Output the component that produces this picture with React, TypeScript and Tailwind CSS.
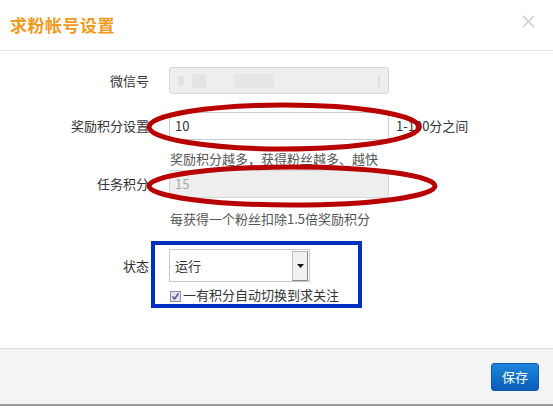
import React from 'react';

const font = { fontFamily: '"Noto Sans CJK SC", "Liberation Sans", sans-serif' };

function Row({ label, children, className = '' }: { label: string; children: React.ReactNode; className?: string }) {
    return (
        <div className={`flex items-center ${className}`}>
            <div className="w-[149px] shrink-0 text-right text-[13px] text-[#333]">{label}</div>
            <div className="ml-[20px] flex items-center">{children}</div>
        </div>
    );
}

export default function App() {
    return (
        <div className="relative flex h-[408px] w-[553px] flex-col bg-white" style={font}>
            {/* header */}
            <div className="flex h-[51px] shrink-0 items-center justify-between border-b border-[#e5e5e5] pl-[10px] pr-[18px]">
                <div className="text-[17px] font-bold tracking-[0.5px] text-[#f39a1e]">求粉帐号设置</div>
                <svg width="13" height="13" viewBox="0 0 13 13" className="mb-[8px]">
                    <path d="M1 1 L12 12 M12 1 L1 12" stroke="#c4c4c4" strokeWidth="1.2" />
                </svg>
            </div>

            {/* body */}
            <div className="flex-1 pt-[16px]">
                <Row label="微信号">
                    <div className="flex h-[27px] w-[220px] items-center gap-[8px] rounded-[3px] border border-[#d6d6d6] bg-[#eeeeee] px-[8px]">
                        <span className="h-[10px] w-[6px] bg-[#e2e2e2]" />
                        <span className="h-[14px] w-[14px] bg-[#e4e4e4]" />
                        <span className="ml-[20px] h-[14px] w-[40px] bg-[#e6e6e6]" />
                        <span className="ml-auto h-[12px] w-[2px] bg-[#dcdcdc]" />
                    </div>
                </Row>

                <Row label="奖励积分设置" className="mt-[18px]">
                    <div className="flex h-[28px] w-[220px] items-center rounded-[3px] border border-[#cccccc] bg-white px-[5px] text-[13px] text-[#333]">
                        10
                    </div>
                    <span className="ml-[7px] text-[13px] text-[#333]">1-100分之间</span>
                </Row>
                <div className="ml-[170px] mt-[10px] h-[18px] text-[13px] leading-[18px] text-[#555]">
                    奖励积分越多，获得粉丝越多、越快
                </div>

                <Row label="任务积分" className="mt-[2px]">
                    <div className="flex h-[28px] w-[220px] items-center rounded-[3px] border border-[#d6d6d6] bg-[#eeeeee] px-[5px] text-[13px] text-[#aaa]">
                        15
                    </div>
                </Row>
                <div className="ml-[170px] mt-[12px] h-[18px] text-[13px] leading-[18px] text-[#555]">
                    每获得一个粉丝扣除1.5倍奖励积分
                </div>

                <Row label="状态" className="mt-[21px]">
                    <div className="flex h-[33px] w-[141px] items-center justify-between border border-[#c8c8c8] bg-white pl-[5px] pr-[1px] text-[13px] text-[#333]">
                        <span>运行</span>
                        <div className="flex h-[30px] w-[16px] items-center justify-center border border-[#bbb] border-b-[#888] border-r-[#888] bg-[#f0f0f0]">
                            <svg width="7" height="4" viewBox="0 0 7 4">
                                <path d="M0 0 H7 L3.5 4 Z" fill="#111" />
                            </svg>
                        </div>
                    </div>
                </Row>
                <div className="ml-[170px] mt-[3px] flex items-center text-[13px] text-[#333]">
                    <span className="mt-[3px] flex h-[11px] w-[11px] items-center justify-center border border-[#8f8f9d] bg-[#dfe4ec]">
                        <svg width="9" height="9" viewBox="0 0 9 9">
                            <path d="M1.5 4.5 L3.5 7 L7.5 1.5" stroke="#4a5a8a" strokeWidth="1.6" fill="none" />
                        </svg>
                    </span>
                    <span className="ml-[2px]">一有积分自动切换到求关注</span>
                </div>
            </div>

            {/* footer */}
            <div className="mb-[2px] flex h-[58px] shrink-0 items-center justify-end border-b-[2px] border-t border-b-[#9a9a9a] border-t-[#dcdcdc] bg-[#f4f4f4] pr-[14px]">
                <button className="h-[28px] w-[48px] rounded-[3px] border border-[#0a5bb0] bg-gradient-to-b from-[#1d86dc] to-[#0a5cb8] text-[13px] text-white">
                    保存
                </button>
            </div>

            {/* annotations drawn over the form */}
            <svg className="pointer-events-none absolute left-0 top-0" width="553" height="408">
                <ellipse cx="284" cy="127" rx="135" ry="22" fill="none" stroke="#b80000" strokeWidth="5" />
                <ellipse cx="292" cy="186" rx="143" ry="19" fill="none" stroke="#b80000" strokeWidth="5" />
                <rect x="153" y="243" width="207" height="63" fill="none" stroke="#0030c0" strokeWidth="4" />
            </svg>
        </div>
    );
}
